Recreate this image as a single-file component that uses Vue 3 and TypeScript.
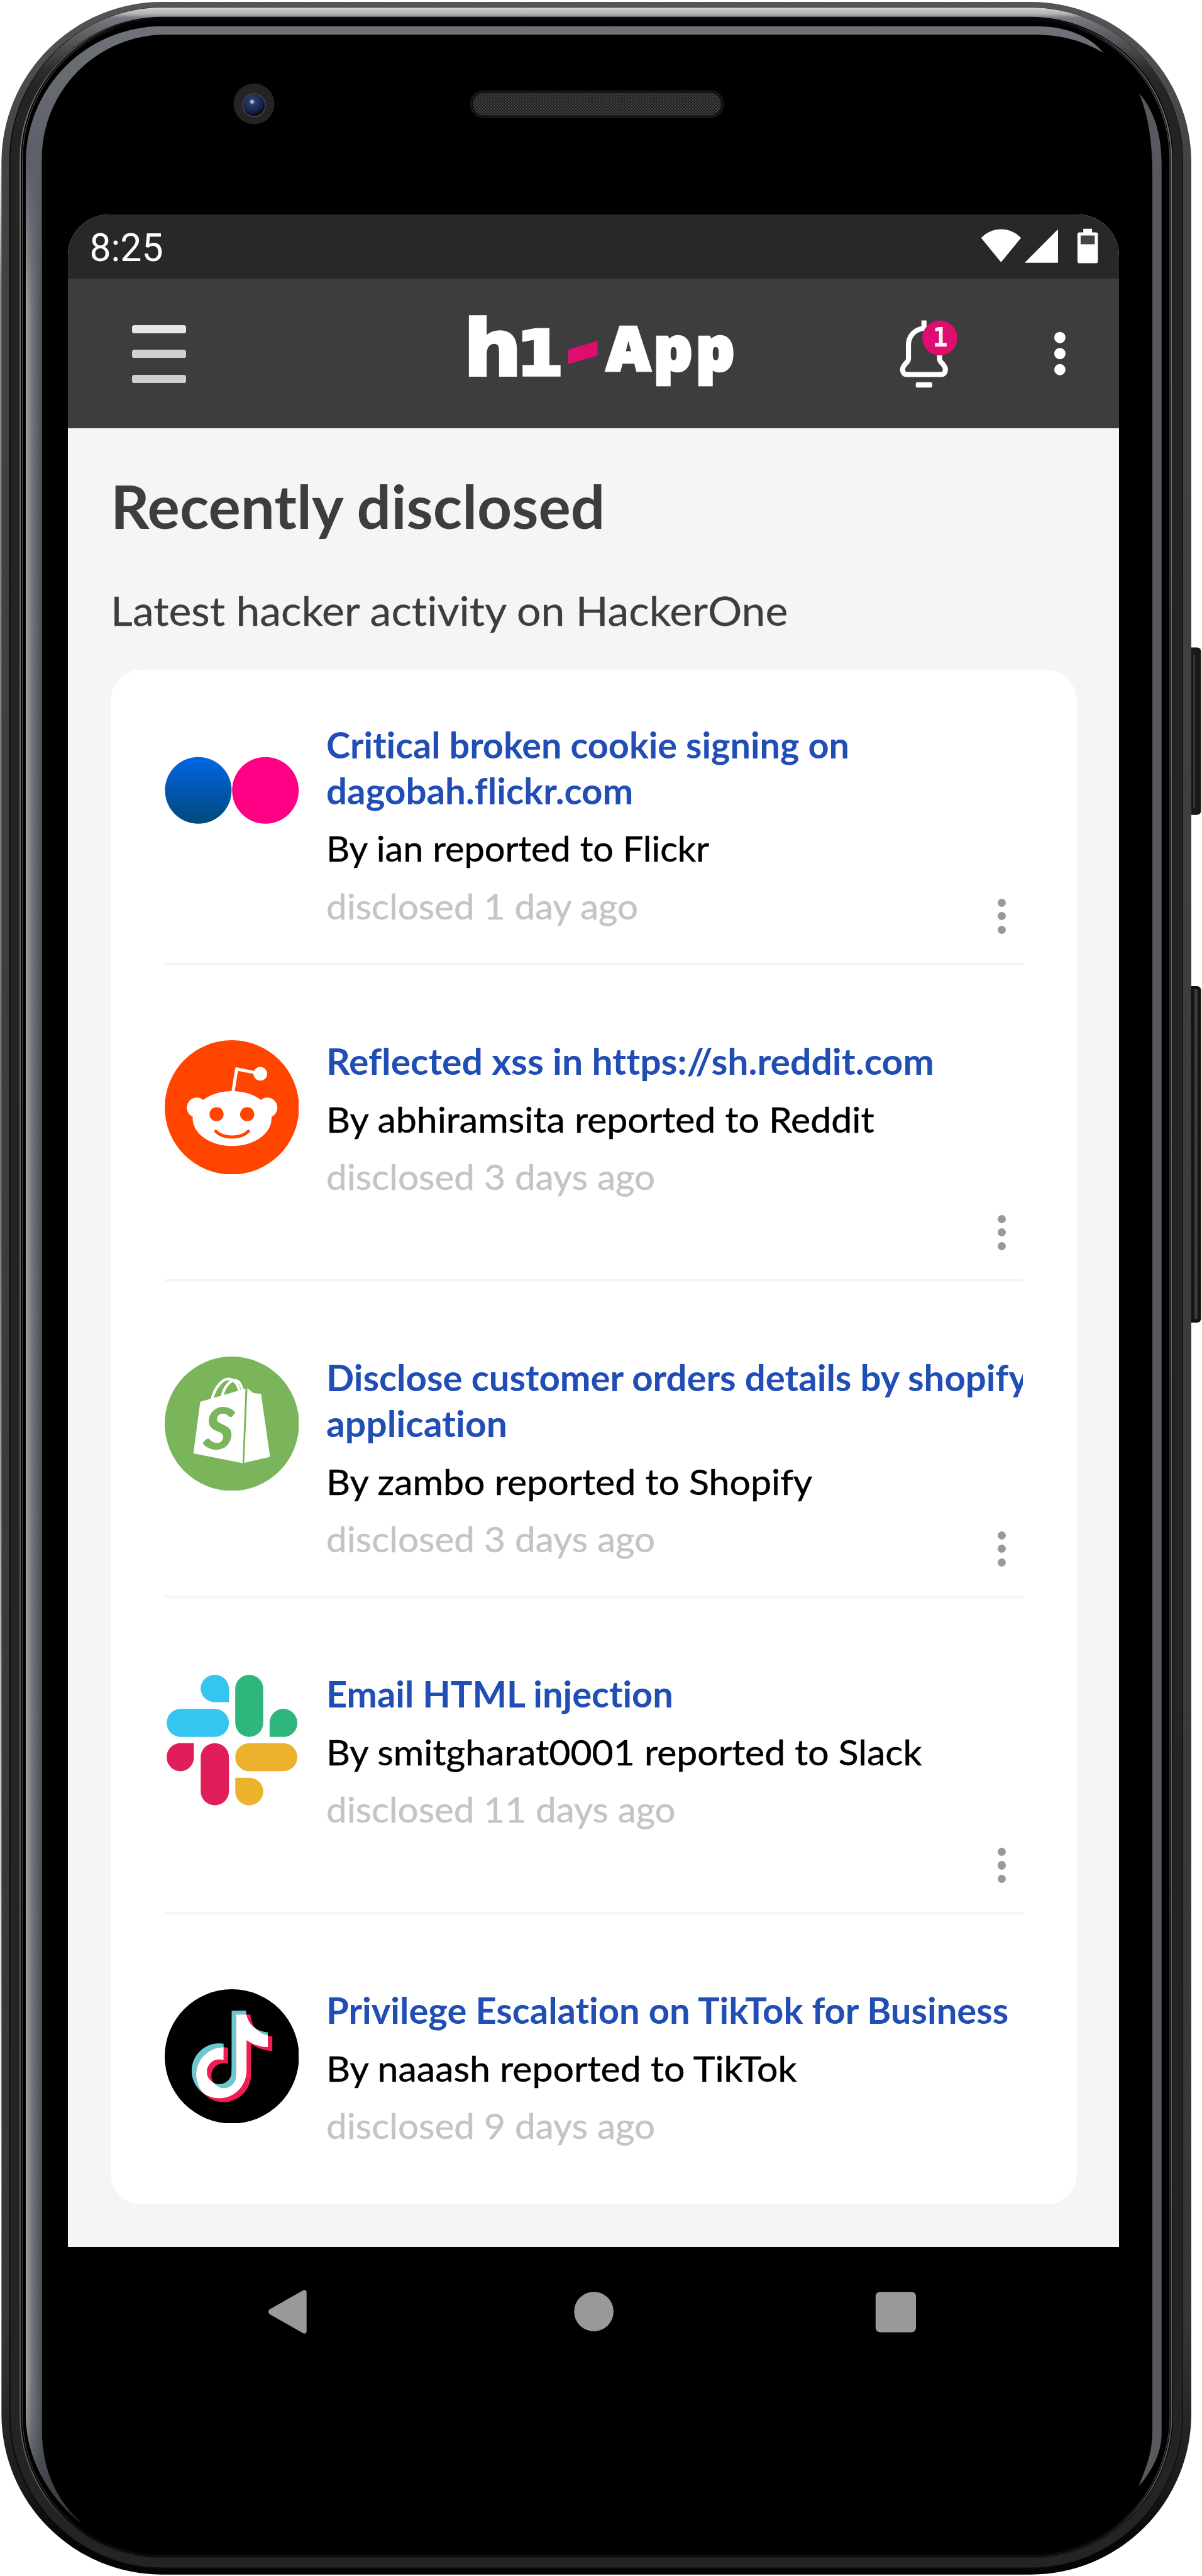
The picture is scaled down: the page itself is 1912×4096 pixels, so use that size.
<script setup lang="ts">
import type { Directive } from 'vue'

type Brand = 'flickr' | 'reddit' | 'shopify' | 'slack' | 'tiktok'

interface Line {
  text: string
  width: number
}

interface Report {
  brand: Brand
  title: Line[]
  by: Line
  age: Line
}

// One design unit is a hundredth of the root font size.
const unit = 0.774

// Widens or narrows a line of text until it measures the given number of design units.
const vFit: Directive<HTMLElement, number> = {
  mounted(el, { value }) {
    const natural = el.getBoundingClientRect().width
    el.style.transform = `scaleX(${((value * unit) / natural).toFixed(4)})`
  },
}

const reports: Report[] = [
  {
    brand: 'flickr',
    title: [
      { text: 'Critical broken cookie signing on', width: 1075 },
      { text: 'dagobah.flickr.com', width: 631 },
    ],
    by: { text: 'By ian reported to Flickr', width: 787 },
    age: { text: 'disclosed 1 day ago', width: 641 },
  },
  {
    brand: 'reddit',
    title: [{ text: 'Reflected xss in https://sh.reddit.com', width: 1249 }],
    by: { text: 'By abhiramsita reported to Reddit', width: 1126 },
    age: { text: 'disclosed 3 days ago', width: 676 },
  },
  {
    brand: 'shopify',
    title: [
      { text: 'Disclose customer orders details by shopify', width: 1442 },
      { text: 'application', width: 372 },
    ],
    by: { text: 'By zambo reported to Shopify', width: 999 },
    age: { text: 'disclosed 3 days ago', width: 676 },
  },
  {
    brand: 'slack',
    title: [{ text: 'Email HTML injection', width: 713 }],
    by: { text: 'By smitgharat0001 reported to Slack', width: 1224 },
    age: { text: 'disclosed 11 days ago', width: 718 },
  },
  {
    brand: 'tiktok',
    title: [{ text: 'Privilege Escalation on TikTok for Business', width: 1402 }],
    by: { text: 'By naaash reported to TikTok', width: 967 },
    age: { text: 'disclosed 9 days ago', width: 676 },
  },
]

const note =
  'M12.525.02c1.31-.02 2.61-.01 3.91-.02.08 1.53.63 3.09 1.75 4.17 1.12 1.11 2.7 1.62 4.24 1.79v4.03c-1.44-.05-2.89-.35-4.2-.97-.57-.26-1.1-.59-1.62-.93-.01 2.92.01 5.84-.02 8.75-.08 1.4-.54 2.79-1.35 3.94-1.31 1.92-3.58 3.17-5.91 3.21-1.43.08-2.86-.31-4.08-1.03-2.02-1.19-3.44-3.37-3.65-5.71-.02-.5-.03-1-.01-1.49.18-1.9 1.12-3.72 2.58-4.96 1.66-1.44 3.98-2.13 6.15-1.72.02 1.48-.04 2.96-.04 4.44-.99-.32-2.15-.23-3.02.37-.63.41-1.11 1.04-1.36 1.75-.21.51-.15 1.07-.14 1.61.24 1.64 1.82 3.02 3.5 2.87 1.12-.01 2.19-.66 2.77-1.61.19-.33.4-.67.41-1.06.1-1.79.06-3.57.07-5.36.01-4.03-.01-8.05.02-12.07z'
</script>

<template>
  <div class="device">
    <svg class="frame" viewBox="0 0 2470 5292" preserveAspectRatio="none" aria-hidden="true">
      <defs>
        <linearGradient id="rim" gradientUnits="userSpaceOnUse" x1="0" y1="0" x2="0" y2="5292">
          <stop offset="0" stop-color="#565454" />
          <stop offset="0.06" stop-color="#454243" />
          <stop offset="0.9" stop-color="#383536" />
          <stop offset="0.965" stop-color="#1c1b1b" />
          <stop offset="0.985" stop-color="#050505" />
        </linearGradient>
        <linearGradient id="band" gradientUnits="userSpaceOnUse" x1="0" y1="16" x2="0" y2="190">
          <stop offset="0" stop-color="#cfcfd4" />
          <stop offset="0.07" stop-color="#b2b3b7" />
          <stop offset="0.12" stop-color="#77797e" />
          <stop offset="0.45" stop-color="#4d4f52" />
          <stop offset="0.75" stop-color="#2b2b2b" />
          <stop offset="1" stop-color="#242424" />
        </linearGradient>
        <linearGradient id="hair" gradientUnits="userSpaceOnUse" x1="0" y1="40" x2="0" y2="5260">
          <stop offset="0" stop-color="#111" />
          <stop offset="0.012" stop-color="#555" />
          <stop offset="0.04" stop-color="#777" />
          <stop offset="0.97" stop-color="#5c5c5c" />
          <stop offset="0.99" stop-color="#1d1d1d" />
        </linearGradient>
        <linearGradient id="glossLeft" gradientUnits="userSpaceOnUse" x1="53" y1="0" x2="86" y2="0">
          <stop offset="0" stop-color="#a2a3a3" />
          <stop offset="0.35" stop-color="#75787d" />
          <stop offset="0.7" stop-color="#5f626a" />
          <stop offset="1" stop-color="#4c4f56" />
        </linearGradient>
        <linearGradient id="fade" gradientUnits="userSpaceOnUse" x1="0" y1="334" x2="0" y2="5186">
          <stop offset="0" stop-color="#000" />
          <stop offset="0.06" stop-color="#fff" />
          <stop offset="0.94" stop-color="#fff" />
          <stop offset="1" stop-color="#000" />
        </linearGradient>
        <linearGradient id="glossBase" gradientUnits="userSpaceOnUse" x1="0" y1="54" x2="0" y2="5186">
          <stop offset="0" stop-color="#707279" />
          <stop offset="0.05" stop-color="#5d6068" />
          <stop offset="0.95" stop-color="#5d6068" />
          <stop offset="1" stop-color="#303136" />
        </linearGradient>
        <mask id="glossMask" maskUnits="userSpaceOnUse" x="0" y="0" width="200" height="5292">
          <rect x="0" y="334" width="200" height="4860" fill="url(#fade)" />
        </mask>
        <linearGradient id="side" gradientUnits="userSpaceOnUse" x1="0" y1="330" x2="0" y2="4500">
          <stop offset="0" stop-color="#fff" />
          <stop offset="0.06" stop-color="#8c8c8c" />
          <stop offset="0.5" stop-color="#777" />
          <stop offset="1" stop-color="#fff" />
        </linearGradient>
        <linearGradient id="key" x1="0" y1="0" x2="1" y2="0">
          <stop offset="0" stop-color="#0c0c0c" />
          <stop offset="0.3" stop-color="#1b1b1b" />
          <stop offset="0.55" stop-color="#4a4a4a" />
          <stop offset="0.75" stop-color="#1c1c1c" />
          <stop offset="1" stop-color="#111" />
        </linearGradient>
        <radialGradient id="lens" cx="0.42" cy="0.35" r="0.6">
          <stop offset="0" stop-color="#6f80ad" />
          <stop offset="0.25" stop-color="#2a3a6a" />
          <stop offset="0.75" stop-color="#17224a" />
          <stop offset="1" stop-color="#0a0d18" />
        </radialGradient>
        <pattern id="mesh" width="6" height="6" patternUnits="userSpaceOnUse">
          <rect width="6" height="6" fill="#161616" />
          <rect width="3" height="3" fill="#505050" />
          <rect x="3" y="3" width="3" height="3" fill="#404040" />
        </pattern>
      </defs>

      <rect x="0" y="330" width="6" height="4170" fill="url(#side)" />
      <rect x="2440" y="1330" width="28" height="344" rx="8" fill="#1a1919" />
      <rect x="2452" y="1345" width="4" height="315" fill="#343434" />
      <rect x="2440" y="2026" width="28" height="691" rx="8" fill="#111" />
      <rect x="2448" y="2032" width="18" height="678" rx="5" fill="url(#key)" />

      <rect x="3" y="4" width="2445" height="5285" rx="330" fill="url(#rim)" />
      <rect x="19" y="15" width="2412" height="5262" rx="315" fill="#0b0b0b" />
      <rect x="31" y="25" width="2389" height="5240" rx="303" fill="#000" stroke="url(#band)" stroke-width="19" />
      <rect x="41.500" y="37" width="2366" height="5217" rx="292" fill="none" stroke="url(#hair)" stroke-width="2.500" />
      <rect x="46" y="41" width="2358" height="5209" rx="288" fill="none" stroke="url(#hair)" stroke-width="1.500" opacity="0.700" />

      <path
        d="M170 5186C110 5140 53 5060 53 4960V334A280 280 0 0 1 333 54H2130C2190 54 2240 74 2268 109C2225 83 2180 71 2120 71H341A255 255 0 0 0 86 326V4990C86 5080 120 5140 170 5186Z"
        fill="url(#glossBase)"
      />
      <path
        d="M170 5186C110 5140 53 5060 53 4960V334H86V4990C86 5080 120 5140 170 5186Z"
        fill="url(#glossLeft)"
        mask="url(#glossMask)"
      />
      <path
        d="M2341 192C2372 228 2387 275 2387 340V5000C2387 5045 2360 5085 2340 5108C2358 5060 2368 5040 2368 4990V360C2368 290 2360 240 2341 192Z"
        fill="#57595e"
      />

      <circle cx="522" cy="213.500" r="42" fill="#242425" />
      <ellipse cx="522" cy="216" rx="23" ry="23.500" fill="url(#lens)" stroke="#55565c" stroke-width="1.500" />
      <circle cx="518" cy="209" r="4" fill="#a3afcc" />
      <rect x="967" y="187" width="520" height="54" rx="27" fill="#0d0d0d" stroke="#202024" stroke-width="2" />
      <rect x="972" y="191" width="510" height="46" rx="22" fill="url(#mesh)" />
    </svg>

    <main class="screen">
      <div class="status">
        <time class="clock">8:25</time>
        <svg class="signals" viewBox="2010 464 250 84" aria-label="Wi-Fi, signal and battery">
          <path fill="#fff" d="M2016 489C2038 465 2076 465 2098 489L2057 539Z" />
          <path fill="#fff" d="M2174 471V540H2105.500Z" />
          <path
            fill="#fff"
            d="M2226 470H2244V477.500H2252Q2256 477.500 2256 481.500V537Q2256 541 2252 541H2218Q2214 541 2214 537V481.500Q2214 477.500 2218 477.500H2226Z"
          />
          <rect x="2220.500" y="484" width="29" height="18" fill="#444" />
        </svg>
      </div>

      <header class="bar">
        <button class="burger" aria-label="Menu"><i></i><i></i><i></i></button>

        <svg class="logo" viewBox="950 572 570 307.500" role="img">
          <g fill="#fff" stroke="#fff">
            <text class="logo-h" x="954" y="770" textLength="118" lengthAdjust="spacingAndGlyphs">h</text>
            <text class="logo-one" x="1062" y="770" textLength="96" lengthAdjust="spacingAndGlyphs">1</text>
            <text class="logo-app" x="1247" y="760" textLength="263" lengthAdjust="spacing">App</text>
          </g>
          <path fill="#e00d70" d="M1168 718L1228.500 700V730L1168 748Z" />
        </svg>

        <button class="bell" aria-label="Notifications">
          <svg viewBox="1845 572 130 307.500">
            <g fill="none" stroke="#fff" stroke-width="10.500">
              <path
                d="M1899 658V674C1878 676 1867 692 1867 708V737C1867 745 1855 748 1855 759C1855 765 1858 769 1864 769H1934C1940 769 1943 765 1943 759C1943 748 1931 745 1931 737V708C1931 692 1920 676 1899 674"
              />
            </g>
            <rect x="1882" y="785" width="34" height="11" rx="4" fill="#fff" />
            <circle cx="1931.500" cy="694" r="36" fill="#e00d70" />
            <text class="badge" x="1917" y="711" textLength="31" lengthAdjust="spacingAndGlyphs">1</text>
          </svg>
        </button>

        <svg class="more" viewBox="2160 572 36 307.500" fill="#fff" aria-label="More">
          <circle cx="2178" cy="693" r="11.600" />
          <circle cx="2178" cy="726" r="11.600" />
          <circle cx="2178" cy="759" r="11.600" />
        </svg>
      </header>

      <section class="feed">
        <h1><span v-fit="1016">Recently disclosed</span></h1>
        <p class="lead"><span v-fit="1392">Latest hacker activity on HackerOne</span></p>

        <ul class="card">
          <li v-for="(r, i) in reports" :key="r.brand" class="row">
            <svg class="avatar" viewBox="0 0 276 276">
              <template v-if="r.brand === 'flickr'">
                <defs>
                  <linearGradient id="flickrBlue" x1="0" y1="0" x2="0" y2="1">
                    <stop offset="0" stop-color="#0065e3" />
                    <stop offset="1" stop-color="#004a7c" />
                  </linearGradient>
                </defs>
                <circle cx="69" cy="138" r="68.500" fill="url(#flickrBlue)" />
                <circle cx="207" cy="138" r="68.500" fill="#ff0084" />
              </template>

              <template v-else-if="r.brand === 'reddit'">
                <circle cx="138" cy="138" r="138" fill="#ff4500" />
                <g fill="#fff">
                  <circle cx="66" cy="138.500" r="20.500" />
                  <circle cx="211" cy="138.500" r="20.500" />
                  <ellipse cx="138.500" cy="161" rx="81" ry="56.500" />
                  <circle cx="196.500" cy="69" r="14" />
                </g>
                <path
                  d="M140 108L148 59L192 68"
                  fill="none"
                  stroke="#fff"
                  stroke-width="6.500"
                  stroke-linejoin="round"
                />
                <circle cx="106.500" cy="152" r="14.500" fill="#ff4500" />
                <circle cx="169.500" cy="152" r="14.500" fill="#ff4500" />
                <path
                  d="M105 187C121 203 156 203 172 187"
                  fill="none"
                  stroke="#ff4500"
                  stroke-width="6.500"
                  stroke-linecap="round"
                />
              </template>

              <template v-else-if="r.brand === 'shopify'">
                <circle cx="138" cy="138" r="138" fill="#7ab55c" />
                <g fill="#fff">
                  <path d="M73 93L166 66L160 219L59 199Z" />
                  <path d="M170 65L182 75L198 77L216.500 206L163.500 218.500Z" />
                </g>
                <g fill="none" stroke="#fff" stroke-width="5.500">
                  <path d="M97 88C104 60 120 46 131 46C144 47 151 58 154 72" />
                  <path d="M118 82C122 62 134 49 144 49C154 50 157 58 160 70" />
                </g>
                <text class="shop-s" x="112" y="191" text-anchor="middle" transform="rotate(4 112 148)">S</text>
              </template>

              <template v-else-if="r.brand === 'slack'">
                <path fill="#36c5f0" d="M103 4C119 4 132 17 132 32.500V60H103C87 60 74 48 74 32C74 17 87 4 103 4Z" />
                <rect x="4" y="74" width="128" height="57.500" rx="28.700" fill="#36c5f0" />
                <rect x="145" y="4" width="57.500" height="127.500" rx="28.700" fill="#2eb67d" />
                <path
                  fill="#2eb67d"
                  d="M244 74C260 74 272.500 87 272.500 103C272.500 119 260 131.500 244 131.500H215.500V103C215.500 87 228 74 244 74Z"
                />
                <path
                  fill="#e01e5a"
                  d="M32 144.500H60V173C60 189 48 202 32 202C17 202 4 189 4 173C4 157 17 144.500 32 144.500Z"
                />
                <rect x="74" y="144.500" width="58" height="127.500" rx="28.700" fill="#e01e5a" />
                <rect x="145" y="144.500" width="127.500" height="57.500" rx="28.700" fill="#ecb22e" />
                <path
                  fill="#ecb22e"
                  d="M145 215.500H173.500C189.500 215.500 202.500 228 202.500 243.500C202.500 259 189.500 272 173.500 272C157.500 272 145 259 145 243.500Z"
                />
              </template>

              <template v-else>
                <defs>
                  <clipPath id="noteClip">
                    <path :d="note" transform="translate(43.700 44) scale(7.500)" />
                  </clipPath>
                </defs>
                <circle cx="138" cy="138" r="138" fill="#000" />
                <path :d="note" transform="translate(43.700 44) scale(7.500)" fill="#69c9d0" />
                <path :d="note" transform="translate(53 52) scale(7.500)" fill="#ee1d52" />
                <g clip-path="url(#noteClip)">
                  <path :d="note" transform="translate(53 52) scale(7.500)" fill="#fff" />
                </g>
              </template>
            </svg>

            <div class="body">
              <h2>
                <span v-for="line in r.title" :key="line.text" v-fit="line.width">{{ line.text }}</span>
              </h2>
              <p class="by"><span v-fit="r.by.width">{{ r.by.text }}</span></p>
              <p class="age"><span v-fit="r.age.width">{{ r.age.text }}</span></p>
            </div>

            <button v-if="i < reports.length - 1" class="dots" aria-label="Options"><i></i><i></i><i></i></button>
          </li>
        </ul>
      </section>

      <nav class="keys">
        <svg viewBox="549 4700 92 100" fill="#999">
          <path d="M554 4744L623 4705Q630 4702 630 4710V4788Q630 4796 623 4793L554 4754Q549 4749 554 4744Z" />
        </svg>
        <svg viewBox="1174 4700 92 100" fill="#999"><circle cx="1220" cy="4748.500" r="40.500" /></svg>
        <svg viewBox="1799 4700 92 100" fill="#999"><rect x="1800" y="4708" width="83" height="83" rx="9" /></svg>
      </nav>
    </main>
  </div>
</template>

<style>
html {
  font-size: 77.4px;
}
body {
  margin: 0;
  background: #fff;
}
</style>

<style scoped>
.device {
  position: relative;
  box-sizing: border-box;
  width: 1912px;
  height: 4096px;
  padding: 4.405rem 0 0 1.4rem;
  overflow: hidden;
  font-family: Lato, 'Open Sans', sans-serif;
  font-variant-ligatures: none;
}
.frame {
  position: absolute;
  inset: 0;
  width: 100%;
  height: 100%;
}
h1,
h2,
p,
ul {
  margin: 0;
  padding: 0;
  font-weight: 400;
  list-style: none;
}
button {
  margin: 0;
  padding: 0;
  border: 0;
  background: none;
}
svg {
  display: block;
  flex: none;
}
span {
  display: inline-block;
  white-space: nowrap;
  transform-origin: 0 50%;
}
.screen {
  position: relative;
  width: 21.6rem;
  display: flex;
  flex-direction: column;
  overflow: hidden;
  border-radius: 0.85rem 0.85rem 0 0;
  background: #f4f6f6;
}
.status {
  height: 1.315rem;
  box-sizing: border-box;
  padding: 0 0.4rem 0 0.44rem;
  display: flex;
  align-items: center;
  justify-content: space-between;
  background: #282828;
}
.clock {
  color: #fff;
  font: 400 0.785rem/1.315rem Roboto, sans-serif;
  padding-top: 0.07rem;
}
.signals {
  width: 2.5rem;
  height: 0.84rem;
}
.bar {
  height: 3.075rem;
  display: flex;
  align-items: stretch;
  background: #3d3d3d;
}
.burger {
  width: 1.11rem;
  margin: 0.96rem 0 0.93rem 1.31rem;
  display: flex;
  flex-direction: column;
  justify-content: space-between;
}
.burger i {
  height: 0.165rem;
  border-radius: 0.05rem;
  background: #d0d0d0;
}
.burger i:first-child {
  background: #e6e6e6;
}
.logo {
  width: 5.7rem;
  margin-left: 5.68rem;
}
.logo-h,
.logo-one {
  font-family: 'DejaVu Sans', sans-serif;
  font-weight: 700;
  stroke-width: 7;
}
.logo-h {
  font-size: 156px;
}
.logo-one {
  font-size: 126px;
}
.logo-app {
  font-family: 'Noto Sans', 'Open Sans', sans-serif;
  font-weight: 900;
  font-size: 124px;
  stroke-width: 6;
}
.bell {
  width: 1.3rem;
  margin-left: 3.25rem;
}
.badge {
  fill: #fff;
  font: 700 56px 'DejaVu Sans Mono', monospace;
}
.more {
  width: 0.36rem;
  margin-left: 1.85rem;
}
.feed {
  height: 37.365rem;
  box-sizing: border-box;
  padding: 0 0.87rem 0 0.88rem;
  color: #3d3d3d;
}
h1 {
  height: 2.7rem;
  line-height: 3.25rem;
}
h1 span {
  font-size: 1.225rem;
  font-weight: 700;
  margin-left: -0.01rem;
  line-height: 1.6rem;
  margin-top: 0.8rem;
  vertical-align: top;
}
.lead {
  height: 2.265rem;
  font-size: 0.82rem;
  line-height: 2.1rem;
}
.lead span {
  -webkit-text-stroke: 0.004rem currentColor;
}
.card {
  height: 31.52rem;
  border-radius: 0.64rem;
  box-sizing: border-box;
  padding: 0 1.11rem 0 1.1rem;
  background: #fff;
}
.row {
  height: 6.5rem;
  box-sizing: border-box;
  padding-top: 1.53rem;
  display: flex;
  align-items: flex-start;
  border-bottom: 0.055rem solid #f4f5f5;
}
.row:first-child {
  height: 6.075rem;
  padding-top: 1.105rem;
}
.row:last-child {
  border-bottom: 0;
}
.avatar {
  width: 2.76rem;
  height: 2.76rem;
}
.body {
  width: 14.31rem;
  margin: -0.035rem 0 0 0.57rem;
  overflow: hidden;
}
h2 {
  color: #204eb4;
}
h2 span {
  display: table;
  font-size: 0.745rem;
  font-weight: 700;
  line-height: 0.94rem;
}
.by,
.age {
  font-size: 0.72rem;
  line-height: 1.18rem;
  -webkit-text-stroke: 0.006rem currentColor;
}
.by {
  margin-top: 0.13rem;
  color: #000;
}
.age {
  color: #c4c4c4;
}
.dots {
  align-self: flex-end;
  width: 0.17rem;
  height: 0.725rem;
  margin: 0 0 0.6rem -0.52rem;
  display: flex;
  flex-direction: column;
  justify-content: space-between;
}
.dots i {
  height: 0.17rem;
  border-radius: 50%;
  background: #999;
}
.shop-s {
  fill: #7ab55c;
  font: italic 900 120px Lato, sans-serif;
}
.keys {
  height: 2.7rem;
  padding-top: 0.84rem;
  box-sizing: border-box;
  display: flex;
  justify-content: center;
  gap: 5.33rem;
  background: #000;
}
.keys svg {
  width: 0.92rem;
  height: 1rem;
}
</style>
